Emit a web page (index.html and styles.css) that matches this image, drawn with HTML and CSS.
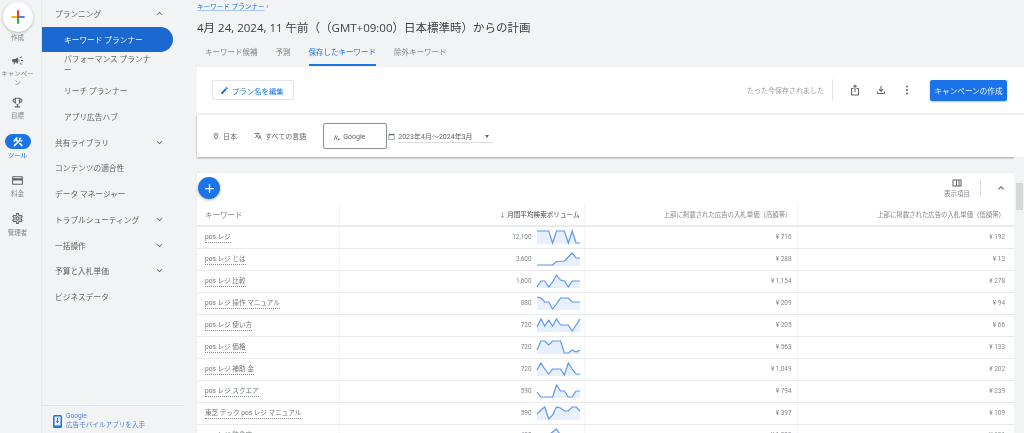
FILE: index.html
```html
<!DOCTYPE html>
<html lang="ja">
<head>
<meta charset="utf-8">
<title>キーワード プランナー</title>
<link rel="stylesheet" href="styles.css">
</head>
<body>
<div class="app">
  <nav class="rail">
    <div class="fab-create">
      <svg class="plus" viewBox="0 0 24 24"><path fill="#ea4335" d="M10.5 2h3v8.5h-3z"/><path fill="#34a853" d="M10.5 13.5h3V22h-3z"/><path fill="#fbbc04" d="M2 10.500h8.500v3H2z"/><path fill="#4285f4" d="M13.500 10.500H22v3h-8.500z"/><path fill="#ea4335" d="M10.500 10.500h3v3h-3z"/></svg>
    </div>
    <div class="rail-label l-create">作成</div>
    <svg class="rail-icon i-camp" viewBox="0 0 24 24"><path d="M18 11v2h4v-2h-4zm-2 6.610c.96.71 2.210 1.650 3.200 2.390.4-.53.8-1.070 1.200-1.600-.99-.74-2.240-1.680-3.200-2.400-.4.54-.8 1.080-1.200 1.610zM20.400 5.600c-.4-.53-.8-1.070-1.200-1.600-.99.74-2.240 1.680-3.200 2.400.4.53.8 1.070 1.200 1.600.96-.72 2.210-1.650 3.200-2.400zM4 9c-1.100 0-2 .9-2 2v2c0 1.100.9 2 2 2h1v4h2v-4h1l5 3V6L8 9H4zm11.500 3c0-1.330-.58-2.530-1.500-3.350v6.690c.92-.81 1.500-2.010 1.500-3.340z"/></svg>
    <div class="rail-label l-camp">キャンペー<br>ン</div>
    <svg class="rail-icon i-goal" viewBox="0 0 24 24"><path fill-rule="evenodd" d="M19 5h-2V3H7v2H5c-1.100 0-2 .9-2 2v1c0 2.550 1.920 4.630 4.390 4.940.63 1.500 1.980 2.630 3.610 2.960V19H7v2h10v-2h-4v-3.100c1.630-.33 2.980-1.460 3.610-2.960C19.080 12.630 21 10.550 21 8V7c0-1.100-.9-2-2-2zM5 8V7h2v3.820C5.840 10.400 5 9.300 5 8zm10 4c0 1.650-1.350 3-3 3s-3-1.350-3-3V5h6v7zm4-4c0 1.300-.84 2.400-2 2.820V7h2v1z"/></svg>
    <div class="rail-label l-goal">目標</div>
    <div class="tool-pill">
      <svg class="tool-icon" viewBox="0 0 24 24"><path d="M13.780 15.300l6 6 2.110-2.160-6-6zM17.500 10.100c-.39 0-.81-.05-1.120-.19L4.970 21.250l-2.110-2.110 7.410-7.400L8.500 9.960l-.72.7-1.450-1.410v2.860l-.7.7-3.520-3.540.7-.7h2.810L4.220 7.160l3.560-3.560c1.170-1.170 3.050-1.170 4.220 0L9.890 5.740l1.410 1.410-.72.72 1.780 1.780 1.810-1.880c-.14-.31-.19-.73-.19-1.090 0-1.970 1.560-3.530 3.520-3.530.59 0 1.110.14 1.580.41L16.410 8.200l1.500 1.500 2.670-2.670c.27.47.41.97.41 1.590 0 1.920-1.590 3.480-3.490 3.480z"/></svg>
    </div>
    <div class="rail-label l-tool">ツール</div>
    <svg class="rail-icon i-bill" viewBox="0 0 24 24"><path d="M20 4H4c-1.110 0-1.990.89-1.990 2L2 18c0 1.110.89 2 2 2h16c1.110 0 2-.89 2-2V6c0-1.110-.89-2-2-2zm0 14H4v-6h16v6zm0-10H4V6h16v2z"/></svg>
    <div class="rail-label l-bill">料金</div>
    <svg class="rail-icon i-admin" viewBox="0 0 24 24"><path d="M19.430 12.980c.04-.32.07-.64.07-.98 0-.34-.03-.66-.07-.98l2.110-1.650c.19-.15.24-.42.12-.64l-2-3.460c-.09-.16-.26-.25-.44-.25-.06 0-.12.01-.17.03l-2.490 1c-.52-.4-1.080-.73-1.690-.98l-.38-2.650C14.460 2.180 14.250 2 14 2h-4c-.25 0-.46.18-.49.42l-.38 2.650c-.61.25-1.170.59-1.690.98l-2.490-1c-.06-.02-.12-.03-.18-.03-.17 0-.34.09-.43.25l-2 3.460c-.13.22-.07.49.12.64l2.110 1.650c-.04.32-.07.65-.07.98 0 .33.03.66.07.98l-2.110 1.650c-.19.15-.24.42-.12.64l2 3.460c.09.16.26.25.44.25.06 0 .12-.01.17-.03l2.490-1c.52.4 1.080.73 1.690.98l.38 2.650c.03.24.24.42.49.42h4c.25 0 .46-.18.49-.42l.38-2.650c.61-.25 1.170-.59 1.690-.98l2.490 1c.06.02.12.03.18.03.17 0 .34-.09.43-.25l2-3.460c.12-.22.07-.49-.12-.64l-2.110-1.650zm-1.980-1.710c.04.31.05.52.05.73 0 .21-.02.43-.05.73l-.14 1.130.89.7 1.080.84-.7 1.210-1.270-.51-1.040-.42-.9.68c-.43.32-.84.56-1.250.73l-1.060.43-.16 1.130-.2 1.350h-1.400l-.19-1.350-.16-1.130-1.060-.43c-.43-.18-.83-.41-1.230-.71l-.91-.7-1.060.43-1.270.51-.7-1.210 1.080-.84.89-.7-.14-1.130c-.03-.31-.05-.54-.05-.74s.02-.43.05-.73l.14-1.130-.89-.7-1.080-.84.7-1.210 1.270.51 1.040.42.9-.68c.43-.32.84-.56 1.250-.73l1.060-.43.16-1.130.2-1.350h1.390l.19 1.350.16 1.130 1.060.43c.43.18.83.41 1.230.71l.91.7 1.060-.43 1.270-.51.7 1.210-1.070.85-.89.7.14 1.130zM12 8c-2.210 0-4 1.790-4 4s1.790 4 4 4 4-1.790 4-4-1.790-4-4-4zm0 6c-1.100 0-2-.9-2-2s.9-2 2-2 2 .9 2 2-.9 2-2 2z"/></svg>
    <div class="rail-label l-admin">管理者</div>
  </nav>

  <aside class="side">
    <ul class="side-list">
      <li class="side-row"><span>プランニング</span><svg class="chev" viewBox="0 0 24 24"><path d="M12 8l-6 6 1.410 1.410L12 10.830l4.590 4.580L18 14z"/></svg></li>
      <li class="side-row sub active"><span>キーワード プランナー</span></li>
      <li class="side-row sub two"><span>パフォーマンス プランナ<br>ー</span></li>
      <li class="side-row sub"><span>リーチ プランナー</span></li>
      <li class="side-row sub"><span>アプリ広告ハブ</span></li>
      <li class="side-row"><span>共有ライブラリ</span><svg class="chev" viewBox="0 0 24 24"><path d="M16.590 8.590L12 13.170 7.410 8.590 6 10l6 6 6-6z"/></svg></li>
      <li class="side-row"><span>コンテンツの適合性</span></li>
      <li class="side-row"><span>データ マネージャー</span></li>
      <li class="side-row"><span>トラブルシューティング</span><svg class="chev" viewBox="0 0 24 24"><path d="M16.590 8.590L12 13.170 7.410 8.590 6 10l6 6 6-6z"/></svg></li>
      <li class="side-row"><span>一括操作</span><svg class="chev" viewBox="0 0 24 24"><path d="M16.590 8.590L12 13.170 7.410 8.590 6 10l6 6 6-6z"/></svg></li>
      <li class="side-row"><span>予算と入札単価</span><svg class="chev" viewBox="0 0 24 24"><path d="M16.590 8.590L12 13.170 7.410 8.590 6 10l6 6 6-6z"/></svg></li>
      <li class="side-row"><span>ビジネスデータ</span></li>
    </ul>
    <div class="side-foot">
      <svg class="phone" viewBox="0 0 9 13"><rect width="9" height="13" rx="1.500" fill="#1a73e8"/><rect x="1.500" y="1.500" width="6" height="9" fill="#e8f0fe"/><path d="M4 3h1v3h1.200L4.500 8.200 2.800 6H4z" fill="#1a73e8"/></svg>
      <div class="foot-text">Google<br>広告モバイルアプリを入手</div>
    </div>
  </aside>

  <main class="main">
    <header class="head">
      <div class="crumb"><span class="crumb-link">キーワード プランナー</span> ›</div>
      <h1 class="title">4月 24, 2024, 11 午前（（GMT+09:00）日本標準時）からの計画</h1>
      <div class="tabs">
        <span class="tab">キーワード候補</span>
        <span class="tab">予測</span>
        <span class="tab on">保存したキーワード</span>
        <span class="tab">除外キーワード</span>
      </div>
    </header>

    <section class="card-plan">
      <button class="btn-edit"><svg class="ico-edit" viewBox="0 0 24 24"><path d="M3 17.250V21h3.750L17.810 9.940l-3.750-3.750L3 17.250zM20.710 7.040c.39-.39.39-1.020 0-1.410l-2.340-2.340c-.39-.39-1.020-.39-1.410 0l-1.830 1.830 3.750 3.750 1.830-1.830z"/></svg>プラン名を編集</button>
      <div class="plan-right">
        <span class="saved">たった今保存されました</span>
        <span class="vline"></span>
        <svg class="act" viewBox="0 0 24 24"><path d="M16 5l-1.420 1.420-1.590-1.590V16h-1.980V4.830L9.420 6.420 8 5l4-4 4 4zm4 5v11c0 1.100-.9 2-2 2H6c-1.110 0-2-.9-2-2V10c0-1.110.89-2 2-2h3v2H6v11h12V10h-3V8h3c1.100 0 2 .89 2 2z"/></svg>
        <svg class="act" viewBox="0 0 24 24"><path d="M18 15v3H6v-3H4v3c0 1.100.9 2 2 2h12c1.100 0 2-.9 2-2v-3h-2zm-1-4l-1.410-1.410L13 12.170V4h-2v8.170L8.410 9.590 7 11l5 5 5-5z"/></svg>
        <svg class="act" viewBox="0 0 24 24"><circle cx="12" cy="5" r="2"/><circle cx="12" cy="12" r="2"/><circle cx="12" cy="19" r="2"/></svg>
        <button class="btn-primary">キャンペーンの作成</button>
      </div>
    </section>

    <section class="card-filter">
      <svg class="f-ico" viewBox="0 0 24 24"><path d="M12 2C8.130 2 5 5.130 5 9c0 5.250 7 13 7 13s7-7.750 7-13c0-3.870-3.130-7-7-7zM7 9c0-2.760 2.240-5 5-5s5 2.240 5 5c0 2.880-2.880 7.190-5 9.880C9.920 16.210 7 11.850 7 9z"/><circle cx="12" cy="9" r="2.500"/></svg>
      <span class="f-text f-country">日本</span>
      <svg class="f-ico" viewBox="0 0 24 24"><path d="M12.870 15.070l-2.540-2.510.03-.03c1.740-1.940 2.980-4.170 3.710-6.530H17V4h-7V2H8v2H1v1.990h11.170C11.500 7.920 10.440 9.750 9 11.350 8.070 10.320 7.300 9.190 6.690 8h-2c.73 1.630 1.730 3.170 2.980 4.560l-5.090 5.020L4 19l5-5 3.110 3.110.76-2.040zM18.500 10h-2L12 22h2l1.120-3h4.750L21 22h2l-4.500-12zm-2.620 7l1.620-4.330L19.120 17h-3.240z"/></svg>
      <span class="f-text f-lang">すべての言語</span>
      <div class="net-box"><svg class="net-ico" viewBox="0 0 24 24"><path d="M2 20L9 4h3l-7 16zM9 20l5-12h3l-5 12zM17 20a3 3 0 1 0 4-4 3 3 0 0 0-4 4z"/></svg>Google</div>
      <svg class="f-ico cal" viewBox="0 0 24 24"><path d="M20 3h-1V1h-2v2H7V1H5v2H4c-1.100 0-2 .9-2 2v16c0 1.100.9 2 2 2h16c1.100 0 2-.9 2-2V5c0-1.100-.9-2-2-2zm0 18H4V8h16v13z"/></svg>
      <div class="date-sel"><span>2023年4月～2024年3月</span><i class="caret"></i></div>
    </section>

    <section class="table-card">
      <div class="toolbar">
        <button class="fab-add"><svg viewBox="0 0 24 24"><path fill="#fff" d="M19 13h-6v6h-2v-6H5v-2h6V5h2v6h6z"/></svg></button>
        <div class="tools">
          <div class="columns-btn"><svg viewBox="0 0 24 24"><path d="M3 5v14h18V5H3zm7 12H5V7h5v10zm2 0V7h3v10h-3zm7 0h-2V7h2v10z"/></svg><span>表示項目</span></div>
          <span class="vline short"></span>
          <svg class="collapse" viewBox="0 0 24 24"><path d="M12 8l-6 6 1.410 1.410L12 10.830l4.590 4.580L18 14z"/></svg>
        </div>
      </div>
      <table class="kw">
        <colgroup><col class="c1"><col class="c2"><col class="c3"><col class="c4"></colgroup>
        <thead>
          <tr>
            <th class="left">キーワード</th>
            <th class="vol-head"><span class="arrow">↓</span> 月間平均検索ボリューム</th>
            <th>上部に掲載された広告の入札単価（高額帯）</th>
            <th class="last-head">上部に掲載された広告の入札単価（低額帯）</th>
          </tr>
        </thead>
        <tbody>
          <tr><td class="left"><span class="key">pos レジ</span></td><td class="vol-cell"><div class="vol"><span>12,100</span><svg class="spark" viewBox="0 0 43 13"><polygon class="area" points="0,13 0,0 11.700,0 15.600,12 19.500,0 27.400,0 31.300,12 35.200,0 39.100,12 43,12 43,13"/><polyline class="line" points="0,0 11.700,0 15.600,12 19.500,0 27.400,0 31.300,12 35.200,0 39.100,12 43,12"/></svg></div></td><td>¥ 716</td><td>¥ 192</td></tr>
          <tr><td class="left"><span class="key">pos レジ とは</span></td><td class="vol-cell"><div class="vol"><span>3,600</span><svg class="spark" viewBox="0 0 43 13"><polygon class="area" points="0,13 0,12 15.600,12 19.500,8.500 27.400,8 31.300,4 35.200,0 39.100,5 43,5 43,13"/><polyline class="line" points="0,12 15.600,12 19.500,8.500 27.400,8 31.300,4 35.200,0 39.100,5 43,5"/></svg></div></td><td>¥ 288</td><td>¥ 13</td></tr>
          <tr><td class="left"><span class="key">pos レジ 比較</span></td><td class="vol-cell"><div class="vol"><span>1,600</span><svg class="spark" viewBox="0 0 43 13"><polygon class="area" points="0,13 0,12 3.900,6 7.800,6 11.700,12 15.600,7 19.500,0 23.500,5 27.400,6 31.300,12 35.200,6 43,6 43,13"/><polyline class="line" points="0,12 3.900,6 7.800,6 11.700,12 15.600,7 19.500,0 23.500,5 27.400,6 31.300,12 35.200,6 43,6"/></svg></div></td><td>¥ 1,154</td><td>¥ 278</td></tr>
          <tr><td class="left"><span class="key">pos レジ 操作 マニュアル</span></td><td class="vol-cell"><div class="vol"><span>880</span><svg class="spark" viewBox="0 0 43 13"><polygon class="area" points="0,13 0,0 3.900,1 7.800,5 11.700,5 15.600,12 19.500,7 23.500,1 31.300,1 35.200,5 43,5 43,13"/><polyline class="line" points="0,0 3.900,1 7.800,5 11.700,5 15.600,12 19.500,7 23.500,1 31.300,1 35.200,5 43,5"/></svg></div></td><td>¥ 209</td><td>¥ 94</td></tr>
          <tr><td class="left"><span class="key">pos レジ 使い方</span></td><td class="vol-cell"><div class="vol"><span>720</span><svg class="spark" viewBox="0 0 43 13"><polygon class="area" points="0,13 0,8 3.900,0 7.800,7 11.700,1 15.600,7 19.500,0 23.500,6 31.300,6 35.200,12 43,0 43,13"/><polyline class="line" points="0,8 3.900,0 7.800,7 11.700,1 15.600,7 19.500,0 23.500,6 31.300,6 35.200,12 43,0"/></svg></div></td><td>¥ 205</td><td>¥ 66</td></tr>
          <tr><td class="left"><span class="key">pos レジ 価格</span></td><td class="vol-cell"><div class="vol"><span>720</span><svg class="spark" viewBox="0 0 43 13"><polygon class="area" points="0,13 0,9 3.900,0 7.800,0 11.700,4 15.600,0 23.500,0 27.400,12 31.300,12 35.200,9 39.100,11 43,9 43,13"/><polyline class="line" points="0,9 3.900,0 7.800,0 11.700,4 15.600,0 23.500,0 27.400,12 31.300,12 35.200,9 39.100,11 43,9"/></svg></div></td><td>¥ 563</td><td>¥ 133</td></tr>
          <tr><td class="left"><span class="key">pos レジ 補助 金</span></td><td class="vol-cell"><div class="vol"><span>720</span><svg class="spark" viewBox="0 0 43 13"><polygon class="area" points="0,13 0,7 3.900,0 7.800,6 11.700,11 15.600,6 23.500,6 27.400,12 31.300,0 35.200,6 39.100,11 43,11 43,13"/><polyline class="line" points="0,7 3.900,0 7.800,6 11.700,11 15.600,6 23.500,6 27.400,12 31.300,0 35.200,6 39.100,11 43,11"/></svg></div></td><td>¥ 1,049</td><td>¥ 202</td></tr>
          <tr><td class="left"><span class="key">pos レジ スクエア</span></td><td class="vol-cell"><div class="vol"><span>590</span><svg class="spark" viewBox="0 0 43 13"><polygon class="area" points="0,13 0,7 3.900,12 15.600,12 19.500,0 23.500,6 27.400,6 31.300,12 35.200,12 39.100,6 43,6 43,13"/><polyline class="line" points="0,7 3.900,12 15.600,12 19.500,0 23.500,6 27.400,6 31.300,12 35.200,12 39.100,6 43,6"/></svg></div></td><td>¥ 794</td><td>¥ 239</td></tr>
          <tr><td class="left"><span class="key">東芝 テック pos レジ マニュアル</span></td><td class="vol-cell"><div class="vol"><span>590</span><svg class="spark" viewBox="0 0 43 13"><polygon class="area" points="0,13 0,7 3.900,3 7.800,0 11.700,12 15.600,8 19.500,0 23.500,1 27.400,4 31.300,4 35.200,0 39.100,0 43,4 43,13"/><polyline class="line" points="0,7 3.900,3 7.800,0 11.700,12 15.600,8 19.500,0 23.500,1 27.400,4 31.300,4 35.200,0 39.100,0 43,4"/></svg></div></td><td>¥ 397</td><td>¥ 109</td></tr>
          <tr><td class="left"><span class="key">pos レジ 飲食店</span></td><td class="vol-cell"><div class="vol"><span>480</span><svg class="spark" viewBox="0 0 43 13"><polygon class="area" points="0,13 0,7 11.700,6 15.600,3 19.500,0 23.500,6 43,6 43,13"/><polyline class="line" points="0,7 11.700,6 15.600,3 19.500,0 23.500,6 43,6"/></svg></div></td><td>¥ 1,223</td><td>¥ 151</td></tr>
        </tbody>
      </table>
    </section>
    <div class="scrollbar"><div class="thumb"></div></div>
  </main>
</div>
</body>
</html>
```
FILE: styles.css
```css
* { box-sizing: border-box; }
html, body { margin: 0; height: 100%; overflow: hidden; }
body {
  font-family: Roboto, "Noto Sans CJK JP", "Noto Sans", sans-serif;
  color: #5f6368;
  background: #f1f3f4;
  font-size: 7.7px;
}
button { font-family: inherit; cursor: pointer; }
ul { list-style: none; margin: 0; padding: 0; }
.app { display: flex; height: 433px; overflow: hidden; filter: blur(.3px); }

/* left rail */
.rail {
  width: 42px; flex: none;
  display: flex; flex-direction: column; align-items: center;
  padding: 2px 6px 0 0;
  border-right: 1px solid #e8eaed;
}
.fab-create {
  width: 30px; height: 30px; border-radius: 50%;
  background: #fff;
  box-shadow: 0 1px 3px rgba(60,64,67,.35);
  display: flex; align-items: center; justify-content: center;
  flex: none;
}
.plus { width: 16px; height: 16px; }
.rail-label { font-size: 6.5px; line-height: 9px; text-align: center; color: #80868b; white-space: nowrap; }
.rail-icon { width: 13px; height: 13px; fill: #5f6368; flex: none; }
.l-create { margin-top: 2px; }
.i-camp { margin-top: 11px; }
.l-camp { margin-top: 3px; }
.i-goal { margin-top: 8px; }
.l-goal { margin-top: 3px; }
.tool-pill {
  width: 26px; height: 15px; border-radius: 8px; background: #1a73e8;
  margin-top: 13px; display: flex; align-items: center; justify-content: center; flex: none;
}
.tool-icon { width: 12px; height: 12px; fill: #fff; }
.l-tool { color: #1a73e8; margin-top: 3px; }
.i-bill { margin-top: 13px; }
.l-bill { margin-top: 3px; }
.i-admin { margin-top: 13px; }
.l-admin { margin-top: 4px; }

/* sidebar */
.side {
  width: 155px; flex: none;
  display: flex; flex-direction: column;
  padding-top: 1px;
}
.side-list { flex: 1; width: 142px; }
.side-row {
  height: 25.7px; width: 131px;
  display: flex; align-items: center; justify-content: space-between;
  padding-left: 13px;
  color: #5f6368;
  white-space: nowrap;
  font-size: 7.7px;
}
.side-row.sub { padding-left: 22px; }
.side-row.active {
  background: #1a68d0; color: #fff;
  border-radius: 0 13px 13px 0;
}
.side-row.two { line-height: 11px; }
.chev { width: 11px; height: 11px; fill: #5f6368; margin-right: 8px; flex: none; }
.side-foot {
  width: 142px; height: 28px;
  border-top: 1px solid #e0e3e6;
  display: flex; align-items: center; gap: 4px;
  padding: 3px 0 0 11px;
}
.phone { width: 9px; height: 13px; flex: none; }
.foot-text { font-size: 6.6px; line-height: 9px; color: #4f7fdb; white-space: nowrap; }

/* main */
.main { flex: 1; min-width: 0; display: flex; flex-direction: column; position: relative; }
.head { height: 67px; flex: none; }
.crumb { height: 14px; font-size: 6.6px; line-height: 15px; color: #1a73e8; }
.crumb-link { text-decoration: underline; text-decoration-color: #a9c8f5; }
.title {
  margin: 0; height: 27px;
  font-family: "Open Sans", "Noto Sans CJK JP", sans-serif;
  font-size: 11.5px; font-weight: 400; line-height: 28px;
  color: #3c4043; white-space: nowrap;
  text-spacing-trim: space-all;
}
.tabs { display: flex; gap: 18px; height: 26px; padding-left: 8px; }
.tab { height: 26px; line-height: 24px; font-size: 7.5px; color: #80868b; }
.tab.on { color: #1a73e8; border-bottom: 2px solid #1a73e8; height: 25px; }

.card-plan {
  height: 46px; background: #fff; flex: none;
  display: flex; align-items: center; justify-content: space-between;
  padding: 0 17px 0 15px;
}
.btn-edit {
  height: 20px; width: 82px; padding: 0 0 0 7px;
  background: #fff; border: 1px solid #e3e5e8; border-radius: 2px;
  color: #1a73e8; font-size: 7.4px;
  display: flex; align-items: center; gap: 3px;
}
.ico-edit { width: 9px; height: 9px; fill: #1a73e8; }
.plan-right { display: flex; align-items: center; }
.saved { font-size: 7px; color: #9aa0a6; }
.vline { display: block; width: 1px; height: 22px; background: #e3e5e8; margin: 0 16px 0 8px; }
.act { width: 12px; height: 12px; fill: #5f6368; margin-right: 14px; flex: none; }
.plan-right .act:nth-of-type(3) { margin-right: 17px; }
.btn-primary {
  width: 77px; height: 21px; padding: 0;
  background: #1a73e8; color: #e8f0fe; border: 0; border-radius: 2px;
  font-size: 7.6px;
  box-shadow: 0 1px 2px rgba(60,64,67,.3);
}

.card-filter {
  height: 42px; margin-top: 2px; background: #fff; flex: none;
  display: flex; align-items: center;
  padding-left: 15px;
  box-shadow: 0 1px 2px rgba(60,64,67,.45);
  font-size: 7px;
}
.f-ico { width: 8px; height: 8px; fill: #5f6368; flex: none; margin-right: 3px; }
.f-text { color: #5f6368; }
.f-country { margin-right: 17px; }
.f-lang { margin-right: 17px; }
.net-box {
  width: 64px; height: 26px;
  border: 1px solid #8a8f94; border-radius: 2px;
  display: flex; align-items: center; padding: 2px 0 0 9px; gap: 3px;
  color: #5f6368; margin-right: 1px;
}
.net-ico { width: 7px; height: 7px; fill: #5f6368; }
.cal { width: 7px; height: 7px; margin-right: 3px; }
.date-sel {
  width: 95px; height: 14px;
  border-bottom: 1px solid #dadce0;
  display: flex; align-items: center; justify-content: space-between;
  padding: 0 4px 0 0;
  font-size: 7px; color: #5f6368;
}
.caret { width: 0; height: 0; border: 2.500px solid transparent; border-top: 3px solid #5f6368; margin-top: 3px; }

/* table */
.table-card { margin-top: 16px; width: 817px; background: #fff; flex: none; box-shadow: 0 0 1px rgba(60,64,67,.15); }
.toolbar { height: 30px; display: flex; align-items: center; justify-content: space-between; padding: 0 7px 0 1px; }
.fab-add {
  width: 22px; height: 22px; border-radius: 50%; border: 0; padding: 1px;
  background: #1a73e8; box-shadow: 0 1px 3px rgba(60,64,67,.4);
  display: flex; align-items: center; justify-content: center;
}
.fab-add svg { width: 15px; height: 15px; }
.tools { display: flex; align-items: center; }
.columns-btn { display: flex; flex-direction: column; align-items: center; font-size: 6.5px; line-height: 10px; color: #80868b; }
.columns-btn svg { width: 12px; height: 12px; fill: #5f6368; }
.vline.short { height: 17px; margin: 0 14px 0 10px; background: #dadce0; }
.collapse { width: 12px; height: 12px; fill: #5f6368; }
.kw { border-collapse: collapse; table-layout: fixed; width: 817px; }
.c1 { width: 142px; } .c2 { width: 245px; } .c3 { width: 213px; } .c4 { width: 217px; }
.kw th {
  height: 23px; padding: 0 5px 0 0; text-align: right;
  font-weight: 400; font-size: 6.4px; color: #80868b;
  border-bottom: 2px solid #e8eaed; border-left: 1px solid #f1f3f4;
  white-space: nowrap;
}
.kw th.last-head { padding-right: 9px; }
.kw th.vol-head { color: #3c4043; padding-right: 4px; font-size: 6.6px; }
.arrow { color: #5f6368; }
.kw td {
  height: 22px; padding: 0 5px 0 0; text-align: right;
  font-size: 6.4px; color: #80868b;
  border-bottom: 1px solid #e8eaed; border-left: 1px solid #f1f3f4;
  white-space: nowrap;
}
.kw td.vol-cell { padding-right: 4px; }
.kw td:last-child { padding-right: 9px; }
.kw th.left, .kw td.left { text-align: left; padding-left: 8px; border-left: 0; color: #80868b; }
.kw th.left { font-size: 7.5px; }
.key { font-size: 6.6px; border-bottom: 1px dotted #80868b; color: #70757a; line-height: 10px; display: inline-block; }
.vol { display: flex; justify-content: flex-end; align-items: center; gap: 5px; }
.spark { width: 43px; height: 13px; flex: none; overflow: visible; }
.area { fill: #e8f0fe; }
.line { fill: none; stroke: #5b96f5; stroke-width: 1.2; }

.scrollbar { position: absolute; right: 0; top: 157px; bottom: 0; width: 10px; background: #f1f3f4; padding: 26px 1px 0 2px; }
.thumb { height: 27px; background: #d5d7d9; }
```
